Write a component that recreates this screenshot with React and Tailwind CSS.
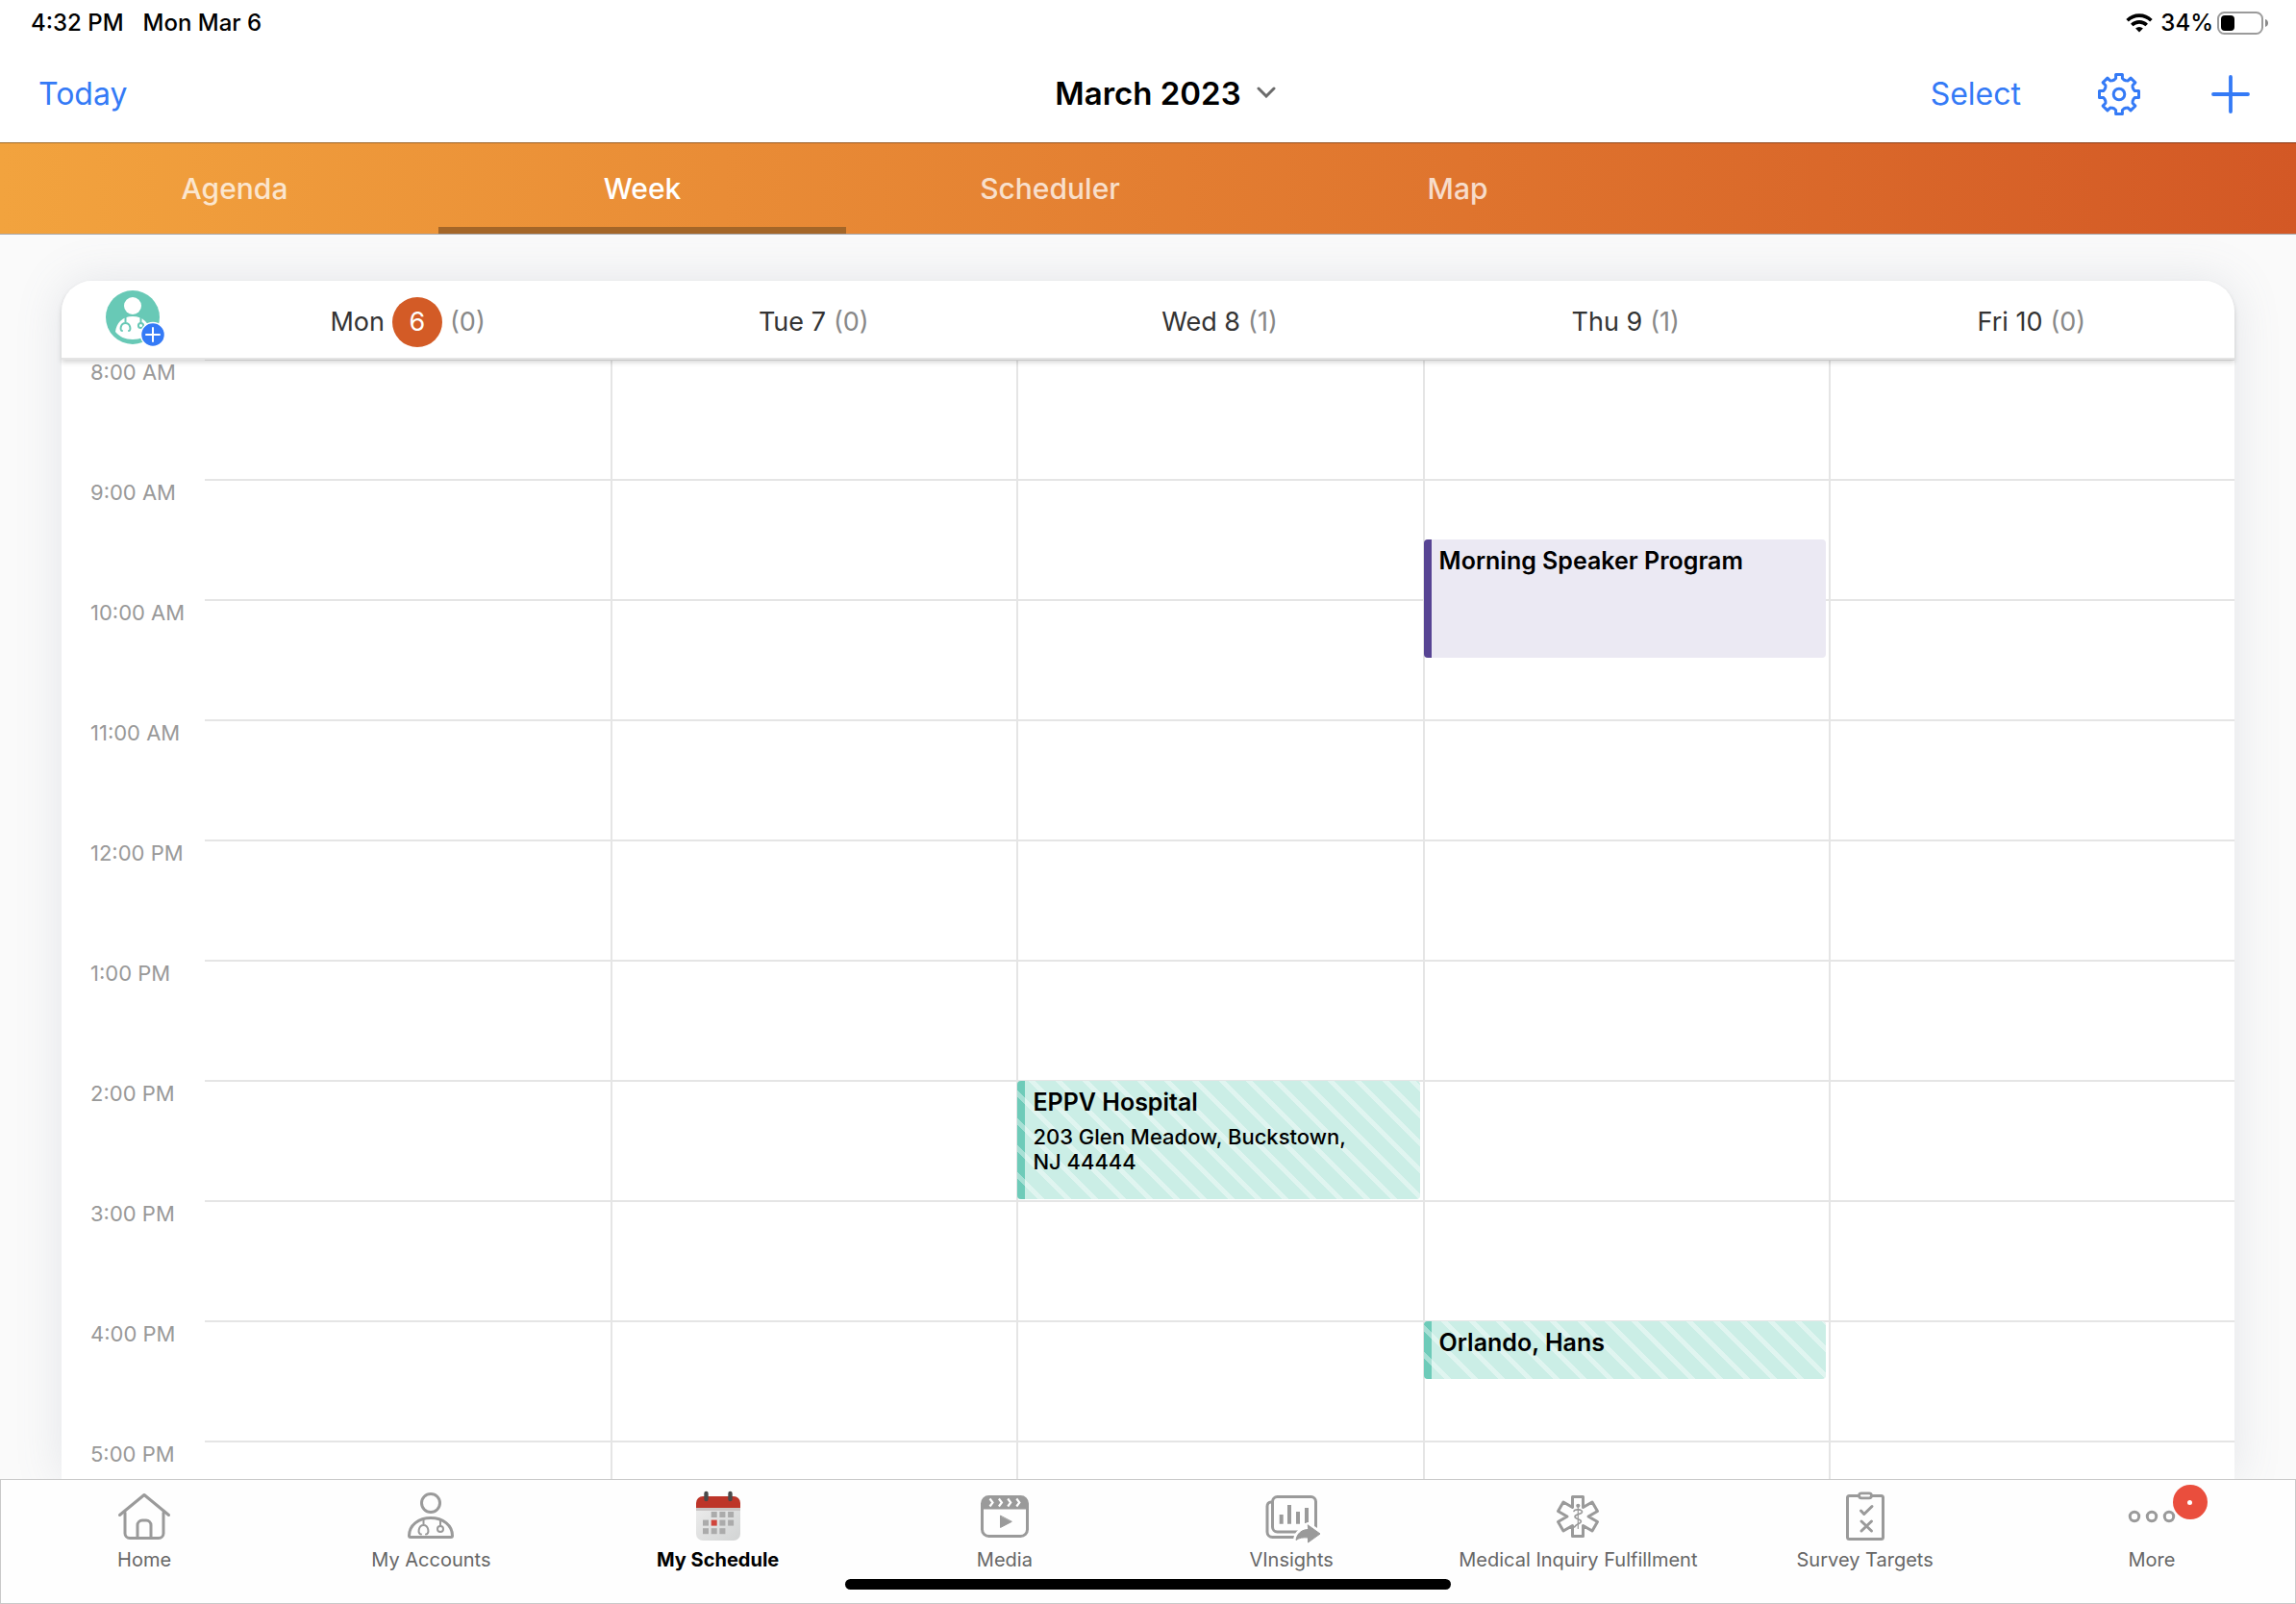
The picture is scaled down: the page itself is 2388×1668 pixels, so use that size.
import { useState } from 'react';
import clsx from 'clsx';

const HOUR_HEIGHT = 125;
const START_HOUR = 8;

const tabs = ['Agenda', 'Week', 'Scheduler', 'Map'];

const hours = [
  '8:00 AM',
  '9:00 AM',
  '10:00 AM',
  '11:00 AM',
  '12:00 PM',
  '1:00 PM',
  '2:00 PM',
  '3:00 PM',
  '4:00 PM',
  '5:00 PM',
];

const days = [
  { name: 'Mon', date: 6, today: true, events: [] },
  { name: 'Tue', date: 7, events: [] },
  {
    name: 'Wed',
    date: 8,
    events: [
      { title: 'EPPV Hospital', address: '203 Glen Meadow, Buckstown, NJ 44444', start: 14, length: 1, kind: 'call' },
    ],
  },
  {
    name: 'Thu',
    date: 9,
    events: [
      { title: 'Morning Speaker Program', start: 9.5, length: 1, kind: 'program' },
      { title: 'Orlando, Hans', start: 16, length: 0.5, kind: 'call' },
    ],
  },
  { name: 'Fri', date: 10, events: [] },
];

// the header count only covers calls, programs are left out
const callCount = (day) => day.events.filter((event) => event.kind === 'call').length;

const WifiIcon = () => (
  <svg viewBox="0 0 28 20" className="w-7 h-5" fill="none" stroke="#000" strokeWidth="3.6" aria-hidden="true">
    <path d="M1.6 7.2a17.6 17.6 0 0 1 24.8 0" />
    <path d="M6.3 12a11 11 0 0 1 15.4 0" />
    <path d="M14 19.6l-3.9-4a5.6 5.6 0 0 1 7.8 0z" fill="#000" stroke="none" />
  </svg>
);

const BatteryIcon = () => (
  <svg viewBox="0 0 54 24" className="w-[54px] h-6" fill="none" aria-hidden="true">
    <rect x="1" y="1" width="46" height="22" rx="6.5" stroke="#9b9b9b" strokeWidth="2" />
    <rect x="4" y="4" width="14" height="16" rx="4" fill="#000" />
    <path d="M50 8c2 .6 3 2.2 3 4s-1 3.4-3 4z" fill="#8a8a8a" />
  </svg>
);

const gearPoints = Array.from({ length: 8 }, (_, i) => {
  const a = (i * Math.PI) / 4;
  return [[-5, -15], [-3.4, -16.5], [-3.4, -20.5], [3.4, -20.5], [3.4, -16.5], [5, -15]]
    .map(([x, y]) => `${(x * Math.cos(a) - y * Math.sin(a)).toFixed(2)},${(x * Math.sin(a) + y * Math.cos(a)).toFixed(2)}`)
    .join(' ');
}).join(' ');

const GearIcon = () => (
  <svg viewBox="-22 -22 44 44" className="w-11 h-11" fill="none" stroke="currentColor" strokeWidth="3" strokeLinejoin="round" aria-hidden="true">
    <polygon points={gearPoints} />
    <circle r="5.8" />
  </svg>
);

const PlusIcon = () => (
  <svg viewBox="0 0 40 40" className="w-10 h-10" stroke="currentColor" strokeWidth="3.8" strokeLinecap="round" aria-hidden="true">
    <path d="M20 2v36M2 20h36" />
  </svg>
);

const AddAccountIcon = () => (
  <svg viewBox="0 0 64 60" className="w-16 h-[60px]" fill="none" aria-hidden="true">
    <circle cx="28" cy="28" r="28" fill="#68c9b6" />
    <circle cx="28" cy="16" r="9" fill="#fff" />
    <path d="M10 43c1-9 7-16 18-16s17 7 18 16c-4 5-10 8-18 8s-14-3-18-8z" fill="#fff" />
    <g stroke="#68c9b6" strokeWidth="2" strokeLinecap="round">
      <path d="M20.5 28v6M17 42c-2.5 0-2-8 3.5-8s6 8 3.5 8" />
      <path d="M36.5 28v6" />
      <circle cx="36.5" cy="36.5" r="2.6" />
    </g>
    <circle cx="49" cy="46" r="12.5" fill="#347af6" stroke="#fff" strokeWidth="1.5" />
    <path d="M49 39v14M42 46h14" stroke="#fff" strokeWidth="2" strokeLinecap="round" />
  </svg>
);

const NavIcon = ({ children }) => (
  <svg
    viewBox="0 0 60 56"
    className="w-[60px] h-14 overflow-visible"
    fill="none"
    stroke="#9a9a9a"
    strokeWidth="3"
    strokeLinecap="round"
    strokeLinejoin="round"
    aria-hidden="true"
  >
    {children}
  </svg>
);

const HomeIcon = () => (
  <NavIcon>
    <path d="M4.5 26.5L30 5.5l25.5 21" />
    <path d="M10 24v21.5a5 5 0 0 0 5 5h30a5 5 0 0 0 5-5V24" />
    <path d="M23 50V37a5 5 0 0 1 5-5h4a5 5 0 0 1 5 5v13" />
  </NavIcon>
);

const AccountsIcon = () => (
  <NavIcon>
    <circle cx="30" cy="14" r="9.5" />
    <path d="M7.5 48c0-11 10-18.5 22.5-18.5S52.5 37 52.5 48a1.5 1.5 0 0 1-1.5 1.5H9A1.5 1.5 0 0 1 7.5 48z" />
    <g strokeWidth="2">
      <path d="M22.5 32v5M20 46.5c-4 0-3-9.5 2.5-9.5s6.5 9.5 2.5 9.5" />
      <path d="M40 32v6" />
      <circle cx="40" cy="41" r="3" />
    </g>
  </NavIcon>
);

const calendarCells = [[1, 0], [2, 0], [3, 0], [0, 1], [1, 1], [2, 1], [3, 1], [0, 2], [1, 2], [2, 2]];

const ScheduleIcon = () => (
  <NavIcon>
    <defs>
      <linearGradient id="calendar-page" x1="0" y1="0" x2="1" y2="1">
        <stop offset="0" stopColor="#efefef" />
        <stop offset="0.5" stopColor="#e0e1e1" />
        <stop offset="1" stopColor="#d2d4d4" />
      </linearGradient>
    </defs>
    <g stroke="none">
      <rect x="7" y="7" width="46" height="46" rx="7" fill="url(#calendar-page)" />
      <path d="M7 19v3h46v-3z" fill="#c9c5c5" />
      <path d="M7 19v-5a7 7 0 0 1 7-7h32a7 7 0 0 1 7 7v5z" fill="#bd3529" />
      {calendarCells.map(([c, r]) => (
        <rect
          key={`${c}-${r}`}
          x={14 + c * 8.7}
          y={23 + r * 8.6}
          width="6"
          height="6"
          fill={c === 1 && r === 1 ? '#d0453c' : '#ababab'}
        />
      ))}
    </g>
    <path d="M17.5 4v6M42.5 4v6" stroke="#4a4a4a" strokeWidth="4.4" />
  </NavIcon>
);

const MediaIcon = () => (
  <NavIcon>
    <rect x="6.5" y="7.5" width="47" height="41" rx="7" />
    <path d="M6.5 20v-6A6.5 6.5 0 0 1 13 7.5h34a6.5 6.5 0 0 1 6.5 6.5v6z" fill="#9a9a9a" stroke="none" />
    <path d="M7 19h46" />
    <path d="M25.5 27.5v12L37 33.5z" fill="#9a9a9a" strokeWidth="1" />
    <g stroke="#fff" strokeWidth="2.2" strokeLinecap="butt" strokeLinejoin="miter">
      <path d="M14.5 9.5l3 4-3 4M23.9 9.5l3 4-3 4M33.2 9.5l3 4-3 4M42.3 9.5l3 4-3 4" />
    </g>
  </NavIcon>
);

const InsightsIcon = () => (
  <NavIcon>
    <path d="M9 13c-2.5 0-4 2-4 4.5V44a5.5 5.5 0 0 0 5.5 5.5H38" />
    <rect x="10.5" y="7.5" width="45" height="36.5" rx="5" />
    <g strokeWidth="4" strokeLinecap="butt">
      <path d="M19.7 26v9.7M28 16v19.7M37 23v12.7M46 19v16" />
    </g>
    <path
      d="M47.5 37L60 46l-12.5 9v-5c-5-.5-9 0-12.5 2.5 1-7 6-11 12.5-11z"
      fill="#fff"
      stroke="#fff"
      strokeWidth="6"
    />
    <path d="M47.5 37L60 46l-12.5 9v-5c-5-.5-9 0-12.5 2.5 1-7 6-11 12.5-11z" fill="#9a9a9a" strokeWidth="1" />
  </NavIcon>
);

const MedicalIcon = () => (
  <NavIcon>
    <polygon points="24.5,7.5 35.5,7.5 35.5,18.5 45,13 50.5,22.5 41,28 50.5,33.5 45,43 35.5,37.5 35.5,48.5 24.5,48.5 24.5,37.5 15,43 9.5,33.5 19,28 9.5,22.5 15,13 24.5,18.5" />
    <circle cx="30.3" cy="16.8" r="2.1" fill="#9a9a9a" stroke="none" />
    <path d="M30.3 17v23.5" strokeWidth="1.2" />
    <path d="M26 22.5c1-2.5 9-2 8.5.8-.4 2.7-7.5 2-7.5 4.9s7 2.2 6.4 5.2c-.4 2.2-4.6 2-6.9 5.6" strokeWidth="1.6" />
  </NavIcon>
);

const SurveyIcon = () => (
  <NavIcon>
    <rect x="11.5" y="6.5" width="37" height="45" rx="2" />
    <rect x="23.5" y="3.8" width="13" height="5" rx="2.5" fill="#fff" strokeWidth="2.8" />
    <path d="M25.5 22l3.3 3.5L37 17.5M26 33l10.5 10M36.5 33L26 43" />
  </NavIcon>
);

const MoreIcon = () => (
  <NavIcon>
    <circle cx="12" cy="28" r="4.7" />
    <circle cx="30" cy="28" r="4.7" />
    <circle cx="48" cy="28" r="4.7" />
  </NavIcon>
);

const navItems = [
  { label: 'Home', icon: HomeIcon },
  { label: 'My Accounts', icon: AccountsIcon },
  { label: 'My Schedule', icon: ScheduleIcon, active: true },
  { label: 'Media', icon: MediaIcon },
  { label: 'VInsights', icon: InsightsIcon },
  { label: 'Medical Inquiry Fulfillment', icon: MedicalIcon },
  { label: 'Survey Targets', icon: SurveyIcon },
  { label: 'More', icon: MoreIcon, badge: true },
];

const StatusBar = () => (
  <div className="flex items-center justify-between h-12 shrink-0 pl-8 pr-7 text-[24px] font-medium">
    <div className="flex gap-5">
      <span>4:32 PM</span>
      <span>Mon Mar 6</span>
    </div>
    <div className="flex items-center gap-2">
      <WifiIcon />
      <div className="flex items-center gap-1">
        <span>34%</span>
        <BatteryIcon />
      </div>
    </div>
  </div>
);

const Header = () => (
  <header className="grid grid-cols-3 items-center h-[100px] shrink-0 px-10 text-[32px] text-[#347af6]">
    <button className="justify-self-start">Today</button>
    <button className="relative justify-self-center text-[33px] text-black font-semibold">
      March 2023
      <svg viewBox="0 0 20 12" className="absolute left-full top-1/2 -mt-2 ml-4 w-5 h-3" fill="none" stroke="#6b6b6b" strokeWidth="3" strokeLinecap="round" aria-hidden="true">
        <path d="M2 2l8 8 8-8" />
      </svg>
    </button>
    <div className="flex items-center justify-self-end pr-2">
      <button className="mr-20">Select</button>
      <button className="mr-[74px]" aria-label="Settings"><GearIcon /></button>
      <button aria-label="New event"><PlusIcon /></button>
    </div>
  </header>
);

const TabBar = ({ active, onChange }) => (
  <nav className="flex h-24 shrink-0 px-8 border-t border-t-black/35 border-b border-b-[#a9a9ad] bg-linear-to-r from-[#f2a33e] to-[#d35825] bg-origin-border">
    {tabs.map((tab) => (
      <button
        key={tab}
        onClick={() => onChange(tab)}
        className={clsx(
          'w-[424px] text-[30px] font-medium border-y-7 border-t-transparent',
          tab === active ? 'text-white border-b-[#a46628]' : 'text-white/75 border-b-transparent'
        )}
      >
        {tab}
      </button>
    ))}
  </nav>
);

const DayHeader = ({ day }) => (
  <div className="flex items-center justify-center h-full pt-1.5 gap-2 text-[27px] text-[#333]">
    <span>
      {day.name} {!day.today && day.date}
    </span>
    {day.today && (
      <span className="flex items-center justify-center size-[52px] rounded-full bg-[#d35b26] text-white">{day.date}</span>
    )}
    <span className="text-[#888]">({callCount(day)})</span>
  </div>
);

const EventBlock = ({ event }) => (
  <button
    className={clsx(
      'absolute -left-px right-[3px] flex rounded-[4px] overflow-hidden text-left text-black',
      event.kind === 'call' ? 'bg-[#cbeee6]' : 'bg-[#ebe9f3]'
    )}
    style={{
      top: Math.floor((event.start - START_HOUR) * HOUR_HEIGHT) + 1,
      height: Math.floor(event.length * HOUR_HEIGHT) - 2,
    }}
  >
    <span className={clsx('w-2 h-full shrink-0', event.kind === 'call' ? 'bg-[#6ecbb9]' : 'bg-[#574493]')} />
    {event.kind === 'call' && (
      <span className="absolute inset-0 bg-[repeating-linear-gradient(45deg,transparent_0px,transparent_15px,#ffffff66_15px,#ffffff66_20px)]" />
    )}
    <span className="relative flex flex-col gap-2 pl-2 pr-12 pt-[7px]">
      <span className="text-[25px] leading-[30px] font-semibold">{event.title}</span>
      {event.address && <span className="text-[22px] leading-[26px] font-medium">{event.address}</span>}
    </span>
  </button>
);

const weekGrid = 'grid grid-cols-[149px_repeat(5,minmax(0,1fr))]';

const WeekView = () => (
  <section className="flex-1 min-h-0 flex flex-col rounded-t-[32px] bg-white shadow-[0_0_48px_rgba(110,125,150,0.17)]">
    <div className={clsx(weekGrid, 'relative z-10 items-center h-[82px] shrink-0 rounded-t-[32px] bg-white border-b-2 border-[#e4e4e4] shadow-[0_3px_5px_rgba(0,0,0,0.16)]')}>
      <button className="self-start pt-2.5 pl-[46px]" aria-label="Add account to schedule">
        <AddAccountIcon />
      </button>
      {days.map((day) => (
        <DayHeader key={day.name} day={day} />
      ))}
    </div>
    <div className="flex-1 min-h-0 overflow-hidden">
      <div className={clsx(weekGrid, '-mt-px')}>
        <div className="pl-[30px]">
          {hours.map((hour) => (
            <div key={hour} className="h-[125px] text-[22px] leading-[28px] text-[#999]">{hour}</div>
          ))}
        </div>
        {days.map((day, i) => (
          <div key={day.name} className={clsx('relative', i > 0 && 'border-l-2 border-[#e5e5e5]')}>
            {hours.map((hour) => (
              <div key={hour} className="h-[125px] border-t-2 border-[#e5e5e5]" />
            ))}
            {day.events.map((event) => (
              <EventBlock key={event.title} event={event} />
            ))}
          </div>
        ))}
      </div>
    </div>
  </section>
);

const BottomNav = () => (
  <nav className="relative z-20 grid grid-cols-8 h-[130px] shrink-0 bg-[#fefefe] border border-[#c9c9c9]">
    {navItems.map((item) => (
      <a
        key={item.label}
        href="#"
        className={clsx(
          'flex flex-col items-center pt-2.5 gap-1 text-[20px] leading-[26px] whitespace-nowrap',
          item.active ? 'text-black font-bold' : 'text-[#666]'
        )}
      >
        <span className="relative">
          <item.icon />
          {item.badge && (
            <span className="absolute -top-[5px] left-[52px] flex items-center justify-center size-9 rounded-full bg-[#ea4e3d]">
              <span className="size-[5px] rounded-full bg-white" />
            </span>
          )}
        </span>
        {item.label}
      </a>
    ))}
    <div className="absolute bottom-[14px] left-1/2 -translate-x-1/2 w-[630px] h-[11px] rounded-full bg-black" />
  </nav>
);

const App = () => {
  const [activeTab, setActiveTab] = useState('Week');

  return (
    <div className="flex flex-col h-screen overflow-hidden bg-white text-black font-[Inter,'Liberation_Sans',sans-serif]">
      <StatusBar />
      <Header />
      <TabBar active={activeTab} onChange={setActiveTab} />
      <main className="flex-1 min-h-0 flex flex-col px-16 pt-12 bg-[#fafafa]">
        <WeekView />
      </main>
      <BottomNav />
    </div>
  );
};

export default App;
